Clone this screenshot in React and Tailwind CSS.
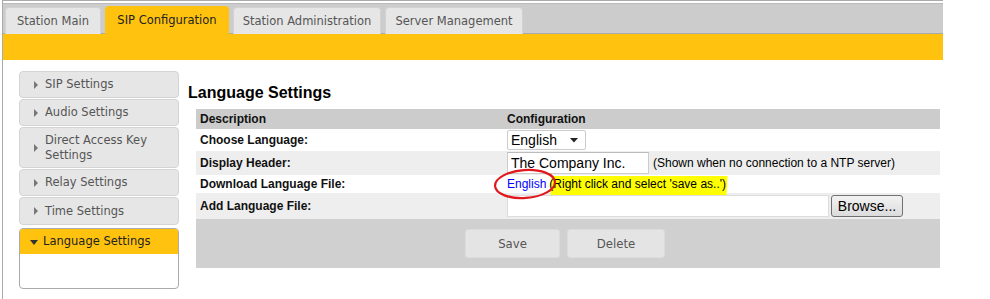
import React from "react";

const tabs = [
  { label: "Station Main", w: "w-[96px]" },
  { label: "SIP Configuration", w: "w-[124px]", active: true },
  { label: "Station Administration", w: "w-[148px]" },
  { label: "Server Management", w: "w-[138px]" },
];

const menu = [
  { label: "SIP Settings", h: "h-[27px]" },
  { label: "Audio Settings", h: "h-[27px]" },
  { label: "Direct Access Key Settings", h: "h-[41px]" },
  { label: "Relay Settings", h: "h-[27px]" },
  { label: "Time Settings", h: "h-[28px]" },
];

const Arrow = ({ down }) => (
  <svg width="8" height="8" viewBox="0 0 8 8" className="shrink-0">
    {down ? <path d="M0 2 L8 2 L4 7 Z" fill="#333" /> : <path d="M2 0 L6 4 L2 8 Z" fill="#777" />}
  </svg>
);

const App = () => {
  return (
    <div className="w-[990px] h-[299px] bg-white overflow-hidden font-['Liberation_Sans',Arial,sans-serif]">
      <div className="ml-[2px] w-[941px] h-full border-l border-t border-[#aaa] pt-[2px]">
        {/* Tabs */}
        <div className="h-[31px] bg-[#ccc] border-t border-[#bbb] border-b border-b-[#aaa] flex items-end gap-[4px] pl-[2px] font-['DejaVu_Sans',Verdana,sans-serif] text-[11.5px]">
          {tabs.map((t) => (
            <div
              key={t.label}
              className={`${t.w} h-[27px] -mb-px rounded-t-[4px] border border-b-0 flex items-center justify-center pt-[1px] ${
                t.active ? "bg-[#ffc20e] border-[#ffc20e] text-[#222] h-[28px]" : "bg-[#e6e6e6] border-[#d2d2d2] text-[#555]"
              }`}
            >
              {t.label}
            </div>
          ))}
        </div>
        <div className="h-[26px] bg-[#ffc20e]" />

        <div className="flex pl-[16px] pt-[11px]">
          {/* Sidebar */}
          <div className="w-[160px] flex flex-col gap-[1px] font-['DejaVu_Sans',Verdana,sans-serif] text-[11.5px] text-[#555]">
            {menu.map((m) => (
              <div
                key={m.label}
                className={`${m.h} bg-[#e6e6e6] border border-[#d4d4d4] rounded-[4px] flex items-center pl-[12px] gap-[5px]`}
              >
                <Arrow />
                <span className="leading-[15px] w-[115px]">{m.label}</span>
              </div>
            ))}
            <div className="h-[61px] mt-[2px] border border-[#aaa] rounded-[4px] overflow-hidden">
              <div className="h-[25px] bg-[#ffc20e] flex items-center pl-[10px] gap-[5px] text-[#222]">
                <Arrow down />
                <span>Language Settings</span>
              </div>
            </div>
          </div>

          {/* Main */}
          <div className="ml-[9px] flex-1">
            <h1 className="font-bold text-[16px] leading-[20px] mt-[12px] text-black">Language Settings</h1>
            <div className="ml-[8px] mt-[6px] w-[744px] text-[12px]">
              <div className="grid grid-cols-[311px_1fr] h-[20px] items-center bg-[#ccc] font-bold text-[#111] pl-[4px]">
                <span>Description</span>
                <span className="-ml-[4px]">Configuration</span>
              </div>
              <div className="grid grid-cols-[311px_1fr] h-[22px] items-center bg-white pl-[4px]">
                <span className="font-bold text-[#111]">Choose Language:</span>
                <div className="-ml-[4px] w-[79px] h-[20px] border border-[#ccc] rounded-[2px] flex items-center justify-between px-[3px] text-[14px] text-black">
                  <span>English</span>
                  <svg width="8" height="5" viewBox="0 0 8 5" className="mr-[4px]">
                    <path d="M0 0 L8 0 L4 4.5 Z" fill="#222" />
                  </svg>
                </div>
              </div>
              <div className="grid grid-cols-[311px_1fr] h-[24px] items-center bg-[#eee] pl-[4px]">
                <span className="font-bold text-[#111]">Display Header:</span>
                <div className="-ml-[4px] flex items-center">
                  <div className="w-[142px] h-[22px] bg-white border border-[#ccc] border-t-[#bbb] flex items-center px-[3px] text-[14px] text-black">
                    The Company Inc.
                  </div>
                  <span className="ml-[4px] text-black">(Shown when no connection to a NTP server)</span>
                </div>
              </div>
              <div className="grid grid-cols-[311px_1fr] h-[18px] items-center bg-white pl-[4px]">
                <span className="font-bold text-[#111]">Download Language File:</span>
                <div className="-ml-[4px] flex items-center relative">
                  <span className="text-[#0000ff]">English</span>
                  <span className="ml-[3px] text-black relative">
                    <span className="absolute left-[2px] -right-[1px] top-[1px] bottom-[-2px] bg-[#ffff00] -skew-x-3" />
                    <span className="relative">(Right click and select 'save as..')</span>
                  </span>
                  <svg width="70" height="34" viewBox="0 0 70 34" className="absolute -left-[16px] -top-[8px] pointer-events-none">
                    <ellipse cx="34" cy="17" rx="30" ry="14" transform="rotate(-4 34 17)" fill="none" stroke="#e0181e" strokeWidth="2.2" />
                  </svg>
                </div>
              </div>
              <div className="grid grid-cols-[311px_1fr] h-[26px] items-center bg-[#eee] pl-[4px]">
                <span className="font-bold text-[#111]">Add Language File:</span>
                <div className="-ml-[4px] flex items-center gap-[2px]">
                  <div className="w-[322px] h-[22px] bg-white border border-[#ddd]" />
                  <div className="w-[72px] h-[22px] rounded-[3px] border border-[#707070] bg-gradient-to-b from-[#f2f2f2] to-[#dcdcdc] flex items-center justify-center text-[14px] text-black">
                    Browse...
                  </div>
                </div>
              </div>
              <div className="h-[49px] bg-[#d1d0d0] flex justify-center items-center gap-[7px] pr-[6px] font-['DejaVu_Sans_Condensed','DejaVu_Sans',sans-serif] text-[13px] text-[#555]">
                <div className="w-[95px] h-[29px] rounded-[3px] bg-[#e4e4e4] border border-[#dcdcdc] flex items-center justify-center">Save</div>
                <div className="w-[98px] h-[29px] rounded-[3px] bg-[#e4e4e4] border border-[#dcdcdc] flex items-center justify-center">Delete</div>
              </div>
            </div>
          </div>
        </div>
      </div>
    </div>
  );
};

export default App;
